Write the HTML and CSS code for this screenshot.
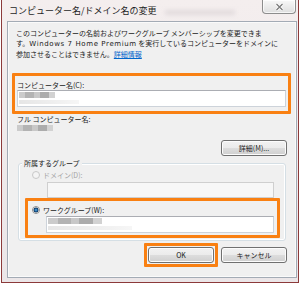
FILE: index.html
```html
<!DOCTYPE html>
<html>
    <head>
        <meta charset="utf-8">
        <title>コンピューター名/ドメイン名の変更</title>
        <link rel="stylesheet" href="styles.css">
    </head>
    <body>
        <div class="window">
            <div class="titlebar">
                <span class="title">コンピューター名/ドメイン名の変更</span>
                <span class="smudge"></span>
                <span class="close-btn">
                    <svg width="9" height="8" viewBox="0 0 9 8"><path d="M1.5 1 L7.5 7 M7.5 1 L1.5 7" stroke="#ffffff" stroke-width="3"/><path d="M1.5 1 L7.5 7 M7.5 1 L1.5 7" stroke="#7d7d7d" stroke-width="1.4"/></svg>
                </span>
            </div>
            <div class="client">
                <p class="intro">このコンピューターの名前およびワークグループ メンバーシップを変更できま<br>す。<span class="latin">Windows 7 Home Premium</span> を実行しているコンピューターをドメインに<br>参加させることはできません。<a href="#">詳細情報</a></p>

                <div class="highlight name-box">
                    <div class="label">コンピューター名(C):</div>
                    <div class="textbox">
                        <span class="blur blur-dark name-dark"></span>
                        <span class="blur blur-light name-light"></span>
                    </div>
                </div><!-- name-box -->

                <div class="label full-label">フル コンピューター名:</div>
                <span class="blur blur-dark full-value"></span>

                <div class="button-row more-row">
                    <div class="btn">詳細(M)...</div>
                </div>

                <div class="group">
                    <div class="group-title">所属するグループ</div>
                    <div class="radio-row disabled domain-row"><span class="radio"></span>ドメイン(D):</div>
                    <div class="textbox domain-field"></div>
                    <div class="highlight workgroup-box">
                        <div class="radio-row"><span class="radio checked"></span>ワークグループ(W):</div>
                        <div class="textbox workgroup-field">
                            <span class="blur blur-dark wg-dark"></span>
                            <span class="blur blur-light wg-light"></span>
                        </div>
                    </div><!-- workgroup-box -->
                </div><!-- group -->

                <div class="button-row footer">
                    <div class="highlight ok-box"><div class="btn">OK</div></div>
                    <div class="btn">キャンセル</div>
                </div>
            </div><!-- client -->
        </div><!-- window -->
    </body>
</html>
```

FILE: styles.css
```css
body {
    margin: 0;
    background: #ffffff;
    font-family: "Noto Sans CJK JP", "Noto Sans", sans-serif;
    font-size: 7px;
    color: #1a1a1a;
}

.window {
    box-sizing: border-box;
    width: 298px;
    height: 283px;
    margin-left: 1px;
    border: 1px solid #8c3a3a;
    border-top: 0;
    padding: 0 1px 4px 5px;
    background: linear-gradient(#f4eeee, #ebe6e8);
    display: flex;
    flex-direction: column;
}

.titlebar {
    flex: none;
    height: 21px;
    display: flex;
    align-items: flex-start;
}

.title {
    font-size: 9px;
    line-height: 12px;
    margin: 5px 0 0 2px;
    color: #1e1e1e;
    white-space: nowrap;
}

.smudge {
    width: 70px;
    height: 5px;
    margin: 10px 0 0 8px;
    background: #d6cfd2;
    filter: blur(2px);
    opacity: 0.6;
}

.close-btn {
    margin-left: auto;
    margin-right: 1px;
    width: 34px;
    height: 14px;
    box-sizing: border-box;
    border: 1px solid #8d8d8d;
    border-top: 0;
    border-radius: 0 0 4px 4px;
    background: linear-gradient(#f8f8f8, #dedede);
    box-shadow: inset 0 0 0 1px rgba(255, 255, 255, 0.7);
    display: flex;
    align-items: center;
    justify-content: center;
}

.client {
    flex: 1;
    border: 1px solid #a3abb5;
    background: #f0f0f0;
    box-shadow: inset 0 0 0 1px #fafafa;
    display: flex;
    flex-direction: column;
}

.intro {
    margin: 6px 0 0 8px;
    line-height: 10px;
    white-space: nowrap;
}

.intro a {
    color: #0066cc;
}

.latin {
    font-family: "DejaVu Sans", sans-serif;
    letter-spacing: 0.6px;
}

.highlight {
    border: 3px solid #f98012;
    border-radius: 1px;
}

.name-box {
    margin: 14px 5px 0 4px;
    padding: 4px 2px;
}

.label {
    line-height: 10px;
    white-space: nowrap;
}

.textbox {
    box-sizing: border-box;
    height: 17px;
    border: 1px solid #cdd3da;
    border-top-color: #abadb3;
    background: #ffffff;
    padding: 1px 0 0 1px;
}

.blur {
    display: block;
    filter: blur(0.7px);
}

.blur-dark {
    height: 6px;
    background: linear-gradient(90deg, #cbcbcb 0 18%, #b3b3b3 18% 42%, #c8c8c8 42% 58%, #acacac 58% 84%, #d2d2d2 84%);
}

.blur-light {
    height: 4px;
    margin-top: 2px;
    background: linear-gradient(90deg, #e6e6e6, #efefef 60%, #f6f6f6);
}

.name-dark {
    width: 36px;
}

.name-light {
    width: 60px;
}

.full-label {
    margin: 0 0 0 9px;
}

.full-value {
    width: 36px;
    margin: 1px 0 0 9px;
}

.button-row {
    display: flex;
    justify-content: flex-end;
    align-items: center;
    padding-right: 9px;
}

.more-row {
    margin-top: 9px;
}

.btn {
    box-sizing: border-box;
    width: 66px;
    height: 16px;
    line-height: 14px;
    text-align: center;
    border: 1px solid #707070;
    border-radius: 3px;
    background: linear-gradient(#f2f2f2 0%, #ebebeb 50%, #dddddd 51%, #cfcfcf 100%);
    box-shadow: inset 0 0 0 1px #fcfcfc;
}

.group {
    margin: 7px 10px 0;
    border: 1px solid #d5dfe5;
    border-radius: 3px;
    box-shadow: inset 0 0 0 1px #ffffff;
    padding-bottom: 2px;
}

.group-title {
    width: max-content;
    margin: -6px 0 0 3px;
    padding: 0 2px;
    background: #f0f0f0;
    line-height: 10px;
}

.radio-row {
    display: flex;
    align-items: center;
    height: 10px;
    line-height: 10px;
    white-space: nowrap;
}

.radio {
    box-sizing: border-box;
    width: 8px;
    height: 8px;
    margin-right: 3px;
    border-radius: 50%;
    border: 1px solid #8f8f8f;
    background: radial-gradient(circle, #ffffff, #dcdcdc);
}

.disabled {
    color: #a3a3a3;
}

.disabled .radio {
    border-color: #c8c8c8;
    background: #f4f4f4;
}

.radio.checked {
    background: radial-gradient(circle, #6cc2f0 0, #1f64a3 1.2px, #143a61 2.3px, #eeeeee 2.7px, #ffffff 100%);
}

.domain-row {
    margin: 2px 0 0 13px;
}

.domain-field {
    height: 16px;
    margin: 2px 11px 0 28px;
    background: #f7f7f7;
    border-color: #cfcfcf;
}

.workgroup-box {
    margin: 0 5px 0 6px;
    padding: 4px 3px 2px 4px;
}

.workgroup-field {
    margin: 1px 0 0 14px;
}

.wg-dark {
    width: 54px;
}

.wg-light {
    width: 84px;
}

.footer {
    margin-top: 2px;
    gap: 3px;
}

.ok-box {
    padding: 1px;
}
```
